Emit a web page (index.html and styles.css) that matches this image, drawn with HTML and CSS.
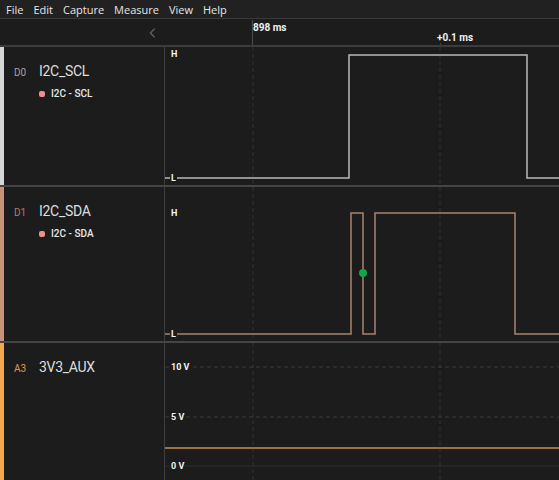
FILE: index.html
```html
<!DOCTYPE html>
<html lang="en">
<head>
    <meta charset="UTF-8">
    <title>Logic Analyzer</title>
    <link rel="stylesheet" href="styles.css">
</head>
<body>
    <div class="app">
        <nav class="menubar">
            <span>File</span>
            <span>Edit</span>
            <span>Capture</span>
            <span>Measure</span>
            <span>View</span>
            <span>Help</span>
        </nav>

        <div class="ruler">
            <div class="ruler-nav">
                <svg class="chevron" viewBox="0 0 8 12" fill="none" stroke="currentColor" stroke-width="1.6">
                    <polyline points="6.5,1 1.5,6 6.5,11"></polyline>
                </svg>
            </div>
            <div class="ruler-track">
                <span class="tick tick-major"></span>
                <span class="time-mark major">898 ms</span>
                <span class="tick tick-minor"></span>
                <span class="time-mark minor">+0.1 ms</span>
            </div>
        </div>

        <!-- D0 -->
        <div class="channel ch-d0">
            <div class="info">
                <div class="head">
                    <span class="ch-id">D0</span>
                    <span class="ch-name">I2C_SCL</span>
                </div>
                <div class="analyzer"><i class="dot"></i>I2C - SCL</div>
            </div>
            <div class="plot">
                <svg width="394" height="138">
                    <line class="grid-v" x1="88" y1="0" x2="88" y2="138"></line>
                    <line class="grid-v" x1="275" y1="0" x2="275" y2="138"></line>
                    <polyline class="wave wave-d0" points="0,131 184,131 184,8 362,8 362,131 394,131"></polyline>
                </svg>
                <span class="level" style="top: 2px">H</span>
                <span class="level" style="top: 126px">L</span>
            </div>
        </div>

        <!-- D1 -->
        <div class="channel ch-d1">
            <div class="info">
                <div class="head">
                    <span class="ch-id">D1</span>
                    <span class="ch-name">I2C_SDA</span>
                </div>
                <div class="analyzer"><i class="dot"></i>I2C - SDA</div>
            </div>
            <div class="plot">
                <svg width="394" height="154">
                    <line class="grid-v" x1="88" y1="0" x2="88" y2="154"></line>
                    <line class="grid-v" x1="275" y1="0" x2="275" y2="154"></line>
                    <polyline class="wave wave-d1" points="0,147 186,147 186,26 198,26 198,147 210,147 210,26 350,26 350,147 394,147"></polyline>
                    <circle class="marker" cx="198" cy="86" r="4"></circle>
                </svg>
                <span class="level" style="top: 21px">H</span>
                <span class="level" style="top: 142px">L</span>
            </div>
        </div>

        <!-- A3 -->
        <div class="channel ch-a3">
            <div class="info">
                <div class="head">
                    <span class="ch-id">A3</span>
                    <span class="ch-name">3V3_AUX</span>
                </div>
            </div>
            <div class="plot">
                <svg width="394" height="137">
                    <line class="grid-v" x1="88" y1="0" x2="88" y2="137"></line>
                    <line class="grid-v" x1="275" y1="0" x2="275" y2="137"></line>
                    <line class="grid-h" x1="0" y1="24" x2="394" y2="24"></line>
                    <line class="grid-h" x1="0" y1="74" x2="394" y2="74"></line>
                    <line class="grid-zero" x1="0" y1="123" x2="394" y2="123"></line>
                    <line class="wave wave-a3" x1="0" y1="105" x2="394" y2="105"></line>
                </svg>
                <span class="level" style="top: 19px">10 V</span>
                <span class="level" style="top: 69px">5 V</span>
                <span class="level" style="top: 118px">0 V</span>
            </div>
        </div>
    </div>
</body>
</html>
```

FILE: styles.css
```css
* {
    margin: 0;
    padding: 0;
    box-sizing: border-box;
}

body {
    background: #1c1c1c;
    color: #dcdcdc;
    font-family: "Open Sans", "Noto Sans", sans-serif;
    width: 559px;
    height: 480px;
    overflow: hidden;
}

.app {
    display: flex;
    flex-direction: column;
    height: 480px;
}

/* Menu */
.menubar {
    height: 19px;
    background: #212121;
    border-bottom: 1px solid #3a3a3a;
    display: flex;
    align-items: center;
    gap: 10px;
    padding-left: 6px;
    font-size: 11px;
    color: #e6e6e6;
}

/* Time ruler */
.ruler {
    height: 28px;
    display: flex;
    border-bottom: 2px solid #3c3c3c;
    background: #1c1c1c;
}

.ruler-nav {
    width: 165px;
    display: flex;
    align-items: center;
    justify-content: flex-end;
    padding-right: 9px;
    padding-top: 2px;
    color: #5f5f5f;
}

.chevron {
    width: 7px;
    height: 10px;
}

.ruler-track {
    flex: 1;
    position: relative;
}

.time-mark {
    position: absolute;
    font-family: Roboto, sans-serif;
    font-size: 10px;
    font-weight: 700;
    color: #f0f0f0;
    white-space: nowrap;
}

.time-mark.major {
    left: 88px;
    top: 3px;
}

.time-mark.minor {
    left: 272px;
    top: 13px;
}

.tick {
    position: absolute;
    width: 1px;
    bottom: 0;
}

.tick-major {
    left: 87px;
    top: 1px;
    background: #4a4a4a;
}

.tick-minor {
    left: 275px;
    top: 24px;
    border-left: 1px dashed #444;
}

/* Channels */
.channel {
    display: grid;
    grid-template-columns: 165px 1fr;
    border-bottom: 2px solid #454545;
}

.ch-d0 { height: 140px; }
.ch-d1 { height: 156px; }
.ch-a3 { flex: 1; border-bottom: none; }

.info {
    border-left: 4px solid #d6d6d6;
    border-right: 1px solid #3e3e3e;
    padding: 16px 10px;
}

.ch-d1 .info { border-left-color: #c8917a; }
.ch-a3 .info { border-left-color: #f4a74c; }

.head {
    display: flex;
    align-items: baseline;
}

.ch-id {
    width: 25px;
    font-family: Roboto, sans-serif;
    font-size: 10px;
    color: #a3a3a3;
}

.ch-d1 .ch-id { color: #b87c62; }
.ch-a3 .ch-id { color: #e3993e; }

.ch-name {
    font-family: Roboto, sans-serif;
    font-size: 14px;
    color: #dedede;
    letter-spacing: -0.3px;
}

.analyzer {
    display: flex;
    align-items: center;
    gap: 6px;
    margin: 9px 0 0 25px;
    font-family: Roboto, sans-serif;
    font-size: 10px;
    font-weight: 500;
    color: #e8e8e8;
}

.dot {
    width: 6px;
    height: 6px;
    border-radius: 2px;
    background: #f08d8d;
}

/* Plots */
.plot {
    position: relative;
    overflow: hidden;
}

.plot svg {
    display: block;
}

.grid-v {
    stroke: #313131;
    stroke-width: 1;
    stroke-dasharray: 4 3;
}

.grid-h {
    stroke: #3a3a3a;
    stroke-width: 1;
    stroke-dasharray: 4 3;
}

.grid-zero {
    stroke: #2c2c2c;
    stroke-width: 1;
}

.wave {
    fill: none;
    stroke-width: 1.5;
}

.wave-d0 { stroke: #b9b9b9; }
.wave-d1 { stroke: #a8826f; }
.wave-a3 { stroke: #c98d4a; stroke-width: 1.5; }

.marker {
    fill: #13a24e;
}

.level {
    position: absolute;
    left: 5px;
    padding: 0 1px;
    background: #1c1c1c;
    font-family: Roboto, sans-serif;
    font-size: 9px;
    font-weight: 700;
    line-height: 10px;
    color: #f2f2f2;
}
```
